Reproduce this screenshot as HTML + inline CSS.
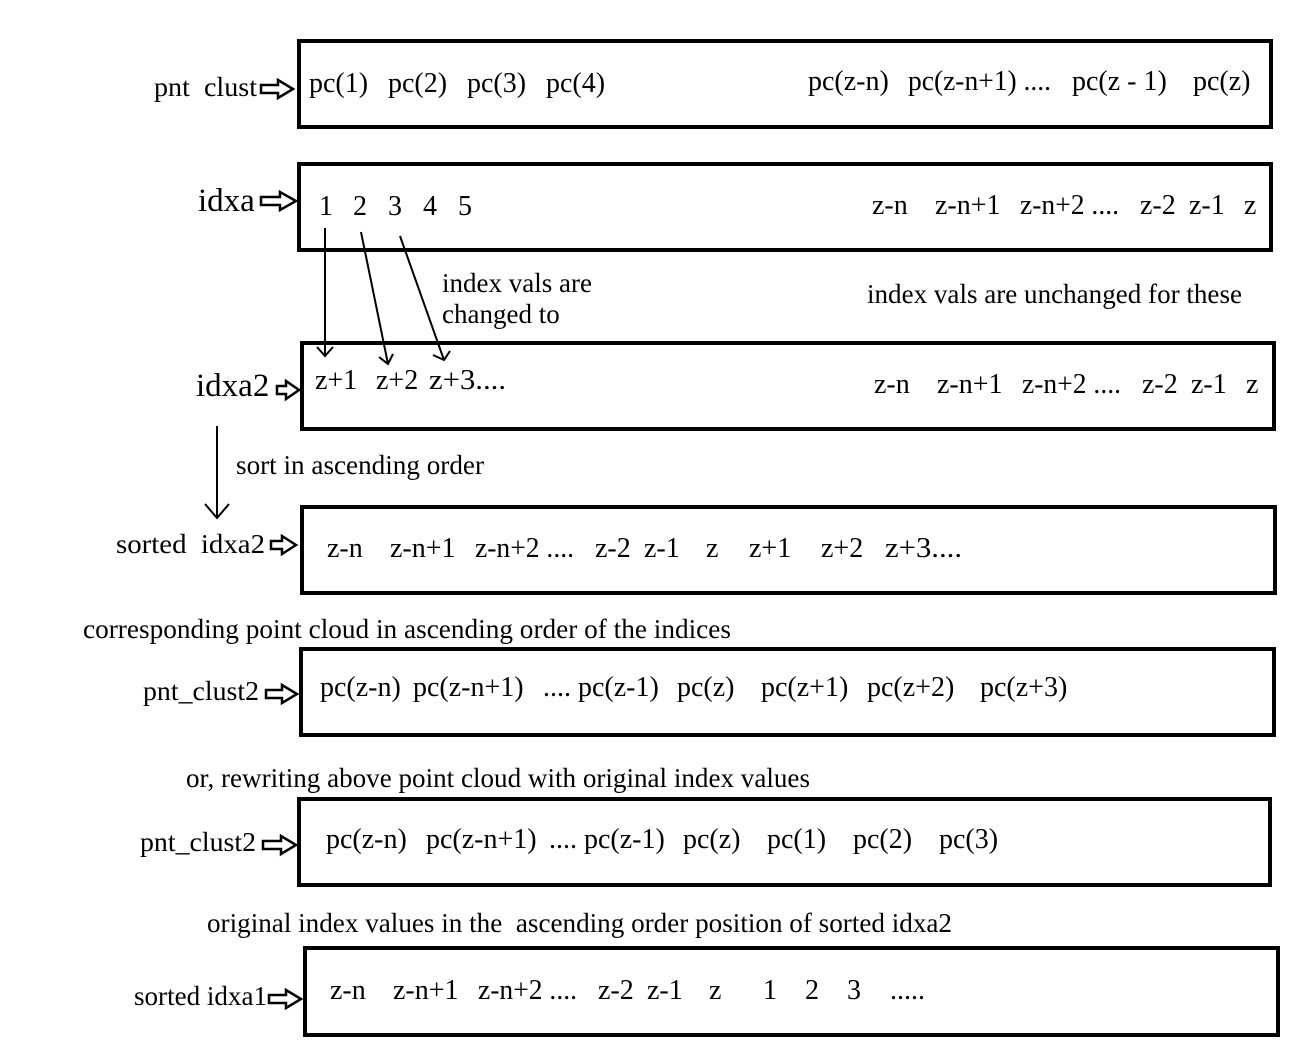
<!DOCTYPE html>
<html><head><meta charset="utf-8"><style>
html,body{margin:0;padding:0;background:#fff;}
svg{display:block;}
text{font-family:"Liberation Serif",serif;font-size:28px;fill:#000;}
.s{font-size:27px;}
.b{font-size:33px;}
.box{fill:none;stroke:#000;stroke-width:4;}
.ba{fill:#fff;stroke:#000;stroke-width:2.5;}
.ln{stroke:#000;stroke-width:2;fill:none;}
</style></head><body>
<svg width="1300" height="1050" viewBox="0 0 1300 1050">
<rect class="box" x="299" y="41" width="972" height="86"/>
<rect class="box" x="299" y="164" width="972" height="86"/>
<rect class="box" x="302" y="343" width="972" height="86"/>
<rect class="box" x="302" y="507" width="973" height="86"/>
<rect class="box" x="301" y="649" width="973" height="86"/>
<rect class="box" x="299" y="799" width="971" height="86"/>
<rect class="box" x="305" y="948" width="973" height="87"/>

<path class="ba" d="M261 85 H278 V80 L293 89 L278 98 V93 H261 Z"/>
<path class="ba" d="M261 197 H280 V192 L296 201 L280 210 V205 H261 Z"/>
<path class="ba" d="M277 386 H286 V381 L299 390 L286 399 V394 H277 Z"/>
<path class="ba" d="M271 541 H282 V536 L296 545 L282 554 V549 H271 Z"/>
<path class="ba" d="M266 690 H282 V685 L297 694 L282 703 V698 H266 Z"/>
<path class="ba" d="M263 841 H281 V836 L296 845 L281 854 V849 H263 Z"/>
<path class="ba" d="M269 995 H286 V990 L301 999 L286 1008 V1003 H269 Z"/>

<path class="ln" d="M325 228 V356 M317 347 L325 356 L333 347"/>
<path class="ln" d="M361 232 L388 364 M379 357 L388 364 L393 354"/>
<path class="ln" d="M400 236 L444 360 M433 355 L444 360 L450 351"/>
<path class="ln" d="M217 426 V518 M205 504 L217 518 L229 504"/>

<text class="s" x="154" y="96" textLength="103" lengthAdjust="spacingAndGlyphs">pnt&#160;&#160;clust</text>
<text x="309" y="92">pc(1)</text><text x="388" y="92">pc(2)</text><text x="467" y="92">pc(3)</text><text x="546" y="92">pc(4)</text>
<text x="808" y="90">pc(z-n)</text><text x="908" y="90" textLength="143" lengthAdjust="spacingAndGlyphs">pc(z-n+1) ....</text><text x="1072" y="90">pc(z - 1)</text><text x="1193" y="90">pc(z)</text>

<text class="b" x="198" y="211">idxa</text>
<text x="319" y="215">1</text><text x="353" y="215">2</text><text x="388" y="215">3</text><text x="423" y="215">4</text><text x="458" y="215">5</text>
<text x="872" y="214">z-n</text><text x="935" y="214">z-n+1</text><text x="1020" y="214" textLength="99" lengthAdjust="spacingAndGlyphs">z-n+2 ....</text><text x="1140" y="214">z-2</text><text x="1189" y="214">z-1</text><text x="1244" y="214">z</text>

<text class="s" x="442" y="292">index vals are</text>
<text class="s" x="442" y="323">changed to</text>
<text class="s" x="867" y="303" textLength="375" lengthAdjust="spacingAndGlyphs">index vals are unchanged for these</text>

<text class="b" x="196" y="396">idxa2</text>
<text x="315" y="389">z+1</text><text x="376" y="389">z+2</text><text x="429" y="389" textLength="77" lengthAdjust="spacingAndGlyphs">z+3....</text>
<text x="874" y="393">z-n</text><text x="937" y="393">z-n+1</text><text x="1022" y="393" textLength="99" lengthAdjust="spacingAndGlyphs">z-n+2 ....</text><text x="1142" y="393">z-2</text><text x="1191" y="393">z-1</text><text x="1246" y="393">z</text>

<text class="s" x="236" y="474" textLength="248" lengthAdjust="spacingAndGlyphs">sort in ascending order</text>

<text class="s" x="116" y="553" textLength="149" lengthAdjust="spacingAndGlyphs">sorted&#160;&#160;idxa2</text>
<text x="327" y="557">z-n</text><text x="390" y="557">z-n+1</text><text x="475" y="557" textLength="99" lengthAdjust="spacingAndGlyphs">z-n+2 ....</text><text x="595" y="557">z-2</text><text x="644" y="557">z-1</text><text x="706" y="557">z</text><text x="749" y="557">z+1</text><text x="821" y="557">z+2</text><text x="885" y="557" textLength="77" lengthAdjust="spacingAndGlyphs">z+3....</text>

<text class="s" x="83" y="638" textLength="648" lengthAdjust="spacingAndGlyphs">corresponding point cloud in ascending order of the indices</text>

<text class="s" x="143" y="700" textLength="116" lengthAdjust="spacingAndGlyphs">pnt_clust2</text>
<text x="320" y="696">pc(z-n)</text><text x="413" y="696">pc(z-n+1)</text><text x="543" y="696">.... pc(z-1)</text><text x="677" y="696">pc(z)</text><text x="761" y="696">pc(z+1)</text><text x="867" y="696">pc(z+2)</text><text x="980" y="696">pc(z+3)</text>

<text class="s" x="186" y="787" textLength="624" lengthAdjust="spacingAndGlyphs">or, rewriting above point cloud with original index values</text>

<text class="s" x="140" y="851" textLength="116" lengthAdjust="spacingAndGlyphs">pnt_clust2</text>
<text x="326" y="848">pc(z-n)</text><text x="426" y="848">pc(z-n+1)</text><text x="549" y="848">.... pc(z-1)</text><text x="683" y="848">pc(z)</text><text x="767" y="848">pc(1)</text><text x="853" y="848">pc(2)</text><text x="939" y="848">pc(3)</text>

<text class="s" x="207" y="932" textLength="745" lengthAdjust="spacingAndGlyphs">original index values in the&#160; ascending order position of sorted idxa2</text>

<text class="s" x="134" y="1005" textLength="133" lengthAdjust="spacingAndGlyphs">sorted idxa1</text>
<text x="330" y="999">z-n</text><text x="393" y="999">z-n+1</text><text x="478" y="999" textLength="99" lengthAdjust="spacingAndGlyphs">z-n+2 ....</text><text x="598" y="999">z-2</text><text x="647" y="999">z-1</text><text x="709" y="999">z</text><text x="763" y="999">1</text><text x="805" y="999">2</text><text x="847" y="999">3</text><text x="890" y="999">.....</text>
</svg>
</body></html>
